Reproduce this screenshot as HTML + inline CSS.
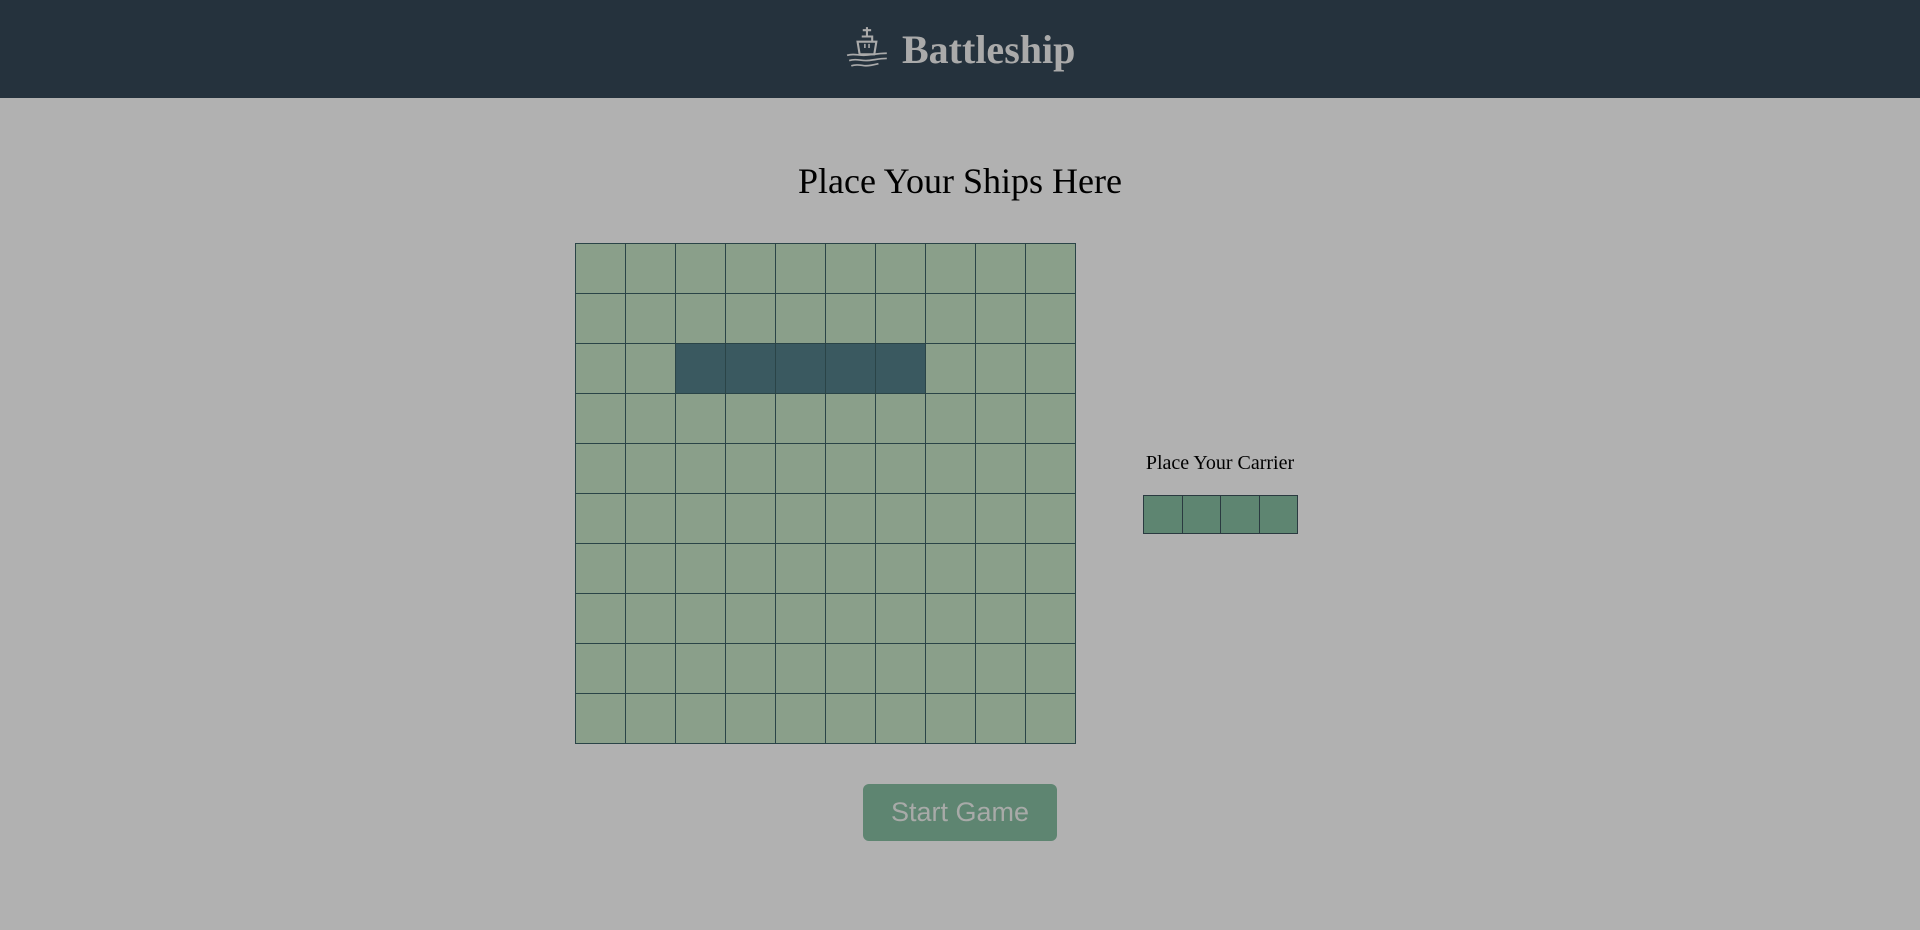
<!DOCTYPE html>
<html><head><style>
body{margin:0;width:1920px;height:930px;background:#b1b1b1;overflow:hidden;font-family:"Liberation Serif",serif;}
.hdr{height:98px;background:#25323d;position:relative;}
.hdr .t{position:absolute;left:902px;top:22px;font-size:40px;font-weight:bold;color:#aaaaaa;line-height:56px;}
.hdr svg{position:absolute;left:845px;top:26px;}
h1{position:absolute;top:159px;left:0;width:1920px;text-align:center;margin:0;font-weight:normal;font-size:36px;line-height:44px;color:#000;}
.grid{position:absolute;left:575px;top:243px;width:500px;height:500px;border-left:1px solid #2a4447;border-top:1px solid #2a4447;display:grid;grid-template-columns:repeat(10,50px);grid-template-rows:repeat(10,50px);}
.grid div{background:#8a9f8a;border-right:1px solid #2a4447;border-bottom:1px solid #2a4447;box-sizing:border-box;}
.grid div.s{background:#3a5960;}
.ct{position:absolute;left:1120px;width:200px;top:450px;text-align:center;font-size:20px;line-height:26px;}
.car{position:absolute;left:1143px;top:495px;width:153px;height:37px;border:1px solid #2a3a40;display:flex;}
.car div{flex:1;background:#5e8571;border-right:1px solid #2a3a40;}
.car div:last-child{border-right:none;}
.btn{position:absolute;left:863px;top:784px;width:194px;height:57px;background:#5e8571;border-radius:6px;color:#a8aaa8;font-family:"Liberation Sans",sans-serif;font-size:27px;text-align:center;line-height:57px;}
</style></head><body>
<div class="hdr">
<svg width="46" height="44" viewBox="0 0 44 42" fill="none" stroke="#aaaaaa" stroke-width="2">
<path d="M21 1v9M17 4h8M16 10h10v5M12 15h18l-2 12H14z"/>
<path d="M19 17v4M23 17v4" stroke-width="1.5"/>
<path d="M2 28c6-2 10 0 16 0s12-2 22-2M4 33c6-2 10 0 16 0s12-2 20-2M6 38c6-2 10 0 14 0s8-1 12-2" stroke-width="1.6"/>
</svg>
<div class="t">Battleship</div>
</div>
<h1>Place Your Ships Here</h1>
<div class="grid">
<div></div><div></div><div></div><div></div><div></div><div></div><div></div><div></div><div></div><div></div>
<div></div><div></div><div></div><div></div><div></div><div></div><div></div><div></div><div></div><div></div>
<div></div><div></div><div class="s"></div><div class="s"></div><div class="s"></div><div class="s"></div><div class="s"></div><div></div><div></div><div></div>
<div></div><div></div><div></div><div></div><div></div><div></div><div></div><div></div><div></div><div></div>
<div></div><div></div><div></div><div></div><div></div><div></div><div></div><div></div><div></div><div></div>
<div></div><div></div><div></div><div></div><div></div><div></div><div></div><div></div><div></div><div></div>
<div></div><div></div><div></div><div></div><div></div><div></div><div></div><div></div><div></div><div></div>
<div></div><div></div><div></div><div></div><div></div><div></div><div></div><div></div><div></div><div></div>
<div></div><div></div><div></div><div></div><div></div><div></div><div></div><div></div><div></div><div></div>
<div></div><div></div><div></div><div></div><div></div><div></div><div></div><div></div><div></div><div></div>
</div>
<div class="ct">Place Your Carrier</div>
<div class="car"><div></div><div></div><div></div><div></div></div>
<div class="btn">Start Game</div>
</body></html>
